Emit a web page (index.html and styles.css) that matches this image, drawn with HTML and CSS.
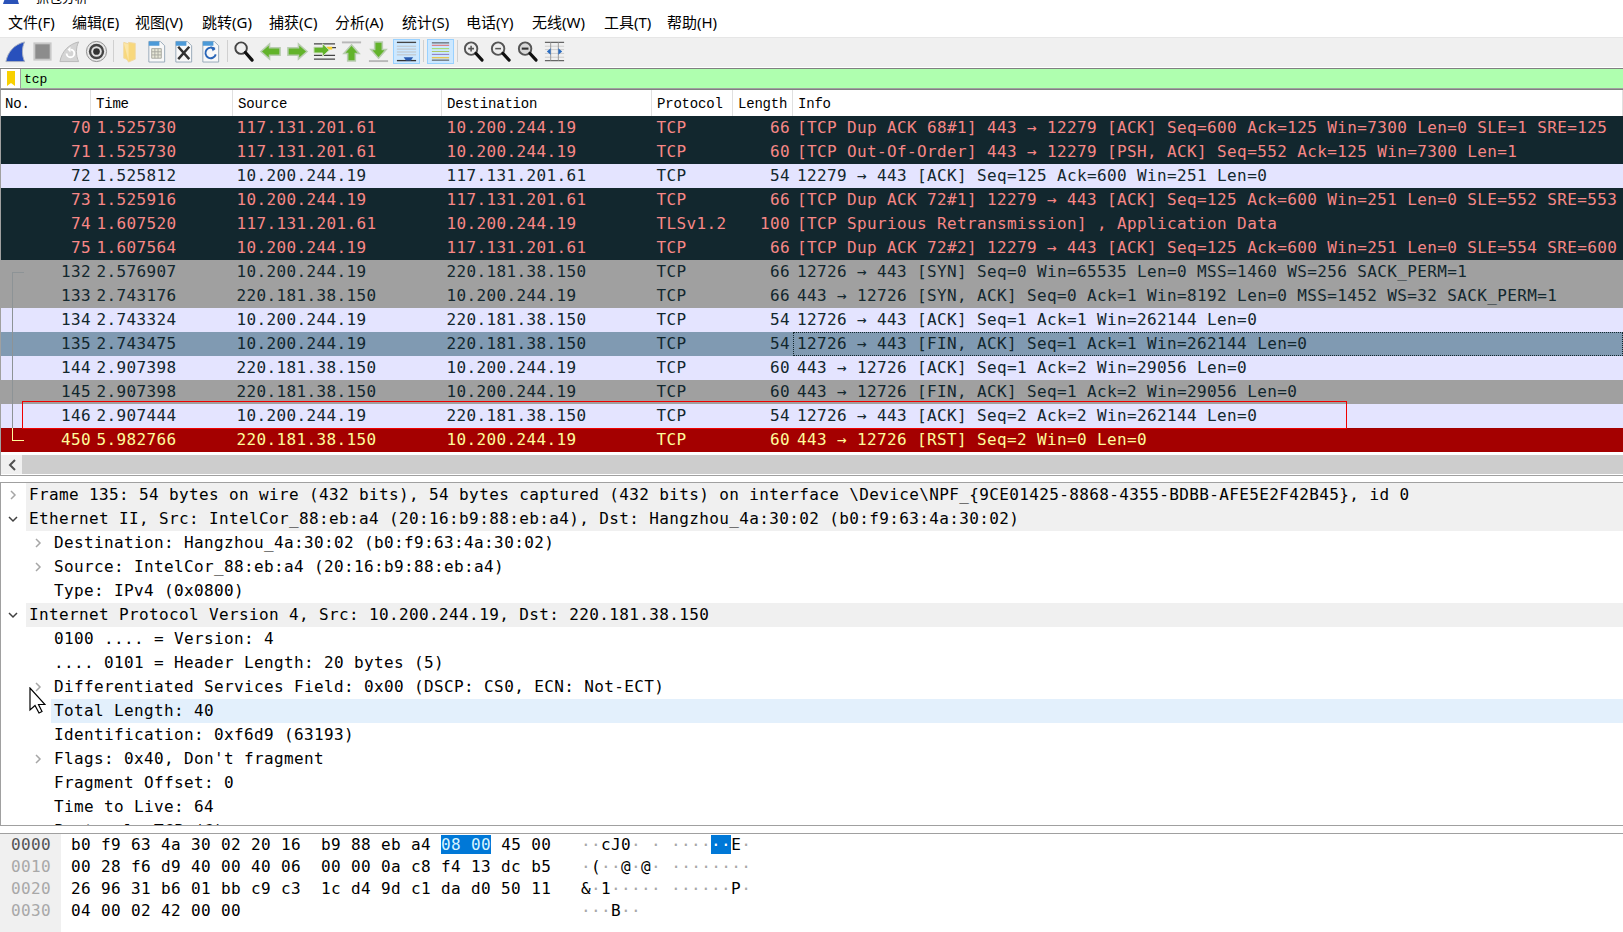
FILE: index.html
```html
<!DOCTYPE html>
<html lang="zh">
<head>
<meta charset="utf-8">
<title>Wireshark</title>
<link rel="stylesheet" href="styles.css">
</head>
<body>
<div class="app">
  <div class="titlebar">
    <svg class="title-icon" width="18" height="18" viewBox="0 0 18 18"><path d="M1 17C3 9 9 3 17 1C15 7 15 12 17 17Z" fill="#2a52b8"/></svg>
    <span class="title-text">抓包分析</span>
  </div>
  <nav class="menubar">
    <span class="m1">文件(F)</span><span class="m2">编辑(E)</span><span class="m3">视图(V)</span><span class="m4">跳转(G)</span><span class="m5">捕获(C)</span><span class="m6">分析(A)</span><span class="m7">统计(S)</span><span class="m8">电话(Y)</span><span class="m9">无线(W)</span><span class="m10">工具(T)</span><span class="m11">帮助(H)</span>
  </nav>
  <div class="toolbar">
    <span class="tb"><svg viewBox="0 0 24 24"><path d="M2 22.5C4 12 11 4.5 21.500 2C18.500 8 18.500 16 21.500 22.500Z" fill="#2850bc" stroke="#a8b0c0"/></svg></span>
    <span class="tb"><svg viewBox="0 0 24 24"><rect x="3.500" y="3.500" width="17" height="17" fill="#8c8c8c" stroke="#c8c8c8" stroke-width="2"/></svg></span>
    <span class="tb"><svg viewBox="0 0 24 24"><path d="M2 22.500C4 12 11 4.500 21.500 2C18.500 8 18.500 16 21.500 22.500Z" fill="#d4d4d4" stroke="#b8b8b8"/><path d="M9 14a4 4 0 1 0 4-4" fill="none" stroke="#fff" stroke-width="2"/><path d="M13 7v6l-3-3Z" fill="#fff"/></svg></span>
    <span class="tb"><svg viewBox="0 0 24 24"><circle cx="12" cy="12" r="10.500" fill="#e8e8e8" stroke="#8c8c8c"/><circle cx="12" cy="12" r="8" fill="#444"/><circle cx="12" cy="12" r="5.500" fill="#e0e0e0"/><circle cx="12" cy="12" r="3.500" fill="#333"/></svg></span>
    <span class="sep"></span>
    <span class="tb"><svg viewBox="0 0 24 24"><path d="M6 2.500L11 4V2.500L18 3.500V20L11 23C10 20 7 19 6 19Z" fill="#f8d87c" stroke="#f0d8a0"/><path d="M6 3L11 4.500V22" fill="#fbe6a8"/></svg></span>
    <span class="tb"><svg viewBox="0 0 24 24"><path d="M4 1.500H16L20.500 6V23H4Z" fill="#f8f8f8" stroke="#98a8b8"/><path d="M4 1.500H15V6H4Z" fill="#4c9ad8"/><path d="M7 9h10v10H7Z M7 12.300h10 M7 15.600h10 M10.300 9v10 M13.600 9v10" fill="#e8e8d8" stroke="#a8a8a0"/></svg></span>
    <span class="tb"><svg viewBox="0 0 24 24"><path d="M4 1.500H16L20.500 6V23H4Z" fill="#f8f8f8" stroke="#98a8b8"/><path d="M4 1.500H15V6H4Z" fill="#4c9ad8"/><path d="M6.500 7L18 20M18 7L6.500 20" stroke="#333" stroke-width="2.600"/></svg></span>
    <span class="tb"><svg viewBox="0 0 24 24"><path d="M4 1.500H16L20.500 6V23H4Z" fill="#f8f8f8" stroke="#98a8b8"/><path d="M4 1.500H15V6H4Z" fill="#4c9ad8"/><path d="M16.500 10A5.500 5.500 0 1 0 17.500 15" fill="none" stroke="#2a66b8" stroke-width="2"/><path d="M12 6.500l5 1.500-2.500 4Z" fill="#2a66b8"/></svg></span>
    <span class="sep"></span>
    <span class="tb"><svg viewBox="0 0 24 24"><circle cx="9.500" cy="8.500" r="6" fill="#f0f0f0" stroke="#444" stroke-width="2"/><path d="M14 13L21 21" stroke="#111" stroke-width="3.400" stroke-linecap="round"/></svg></span>
    <span class="tb"><svg viewBox="0 0 24 24"><path d="M2 12L11 4V8H22V16H11V20Z" fill="#62b32a" stroke="#b8ccb0" stroke-width="1.600"/></svg></span>
    <span class="tb"><svg viewBox="0 0 24 24"><path d="M22 12L13 4V8H2V16H13V20Z" fill="#62b32a" stroke="#b8ccb0" stroke-width="1.600"/></svg></span>
    <span class="tb"><svg viewBox="0 0 24 24"><path d="M1 4H23M1 8h23M1 16H23M1 20H23" stroke="#444" stroke-width="1.400"/><path d="M14 7h6v3h-6z" fill="#f4d030"/><path d="M17 10.500L10 4V7.500H1V13.500H10V17Z" fill="#62b32a" stroke="#d0e0c0"/></svg></span>
    <span class="tb"><svg viewBox="0 0 24 24"><path d="M2 2.500H22" stroke="#b8b8b8" stroke-width="2"/><path d="M12 5L20 14H16V22H8V14H4Z" fill="#62b32a" stroke="#b8ccb0" stroke-width="1.600"/></svg></span>
    <span class="tb"><svg viewBox="0 0 24 24"><path d="M2 22H22" stroke="#b8b8b8" stroke-width="2"/><path d="M12 19L20 10H16V2H8V10H4Z" fill="#62b32a" stroke="#b8ccb0" stroke-width="1.600"/></svg></span>
    <span class="tb on"><svg viewBox="0 0 24 24"><path d="M2 2.500H22" stroke="#444" stroke-width="1.400"/><path d="M2 6.500H22M2 9.500H22M2 12.500H22M2 15.500H22" stroke="#c0c0c0"/><path d="M2 21.500H22" stroke="#333" stroke-width="1.400"/><path d="M9 18H19L16.500 21.500H11.500Z" fill="#2a5cb0"/></svg></span>
    <span class="sep"></span>
    <span class="tb on"><svg viewBox="0 0 24 24"><path d="M3 3H21" stroke="#444"/><path d="M3 5.500H21" stroke="#e06060"/><path d="M3 9H21" stroke="#a0d860"/><path d="M3 12H21" stroke="#a8c860"/><path d="M3 15H21" stroke="#8870c0"/><path d="M3 18.500H21" stroke="#e8c040" stroke-width="1.300"/><path d="M3 21H21" stroke="#444"/></svg></span>
    <span class="sep"></span>
    <span class="tb"><svg viewBox="0 0 24 24"><circle cx="9.500" cy="9" r="6.500" fill="#eee" stroke="#555" stroke-width="2"/><path d="M6.500 9h6M9.500 6v6" stroke="#555" stroke-width="1.600"/><path d="M14.500 14L21 21" stroke="#111" stroke-width="3.200" stroke-linecap="round"/></svg></span>
    <span class="tb"><svg viewBox="0 0 24 24"><circle cx="9.500" cy="9" r="6.500" fill="#eee" stroke="#555" stroke-width="2"/><path d="M6.500 9h6" stroke="#555" stroke-width="1.600"/><path d="M14.500 14L21 21" stroke="#111" stroke-width="3.200" stroke-linecap="round"/></svg></span>
    <span class="tb"><svg viewBox="0 0 24 24"><circle cx="9.500" cy="9" r="6.500" fill="#d8d8d8" stroke="#555" stroke-width="2"/><path d="M6 9h7" stroke="#333" stroke-width="2.200"/><path d="M14.500 14L21 21" stroke="#111" stroke-width="3.200" stroke-linecap="round"/></svg></span>
    <span class="tb"><svg viewBox="0 0 24 24"><path d="M2 2.500H22M2 21.500H22" stroke="#666" stroke-width="1.300"/><path d="M2 6.500H22M2 10H22M2 14H22M2 18H22" stroke="#ccc"/><path d="M8 2.500V21.500M16 2.500V21.500" stroke="#999"/><path d="M4 12L8 8.500V15.500ZM20 12L16 8.500V15.500Z" fill="#2a6cc0"/></svg></span>
  </div>
  <div class="filter">
    <span class="filter-mark"><svg width="10" height="16" viewBox="0 0 10 16"><path d="M1 0H9V15L5 12L1 15Z" fill="#f8d000"/></svg></span>
    <span class="filter-text">tcp</span>
  </div>
  <section class="plist">
    <div class="phead">
      <span class="h1">No.</span><span class="h2">Time</span><span class="h3">Source</span><span class="h4">Destination</span><span class="h5">Protocol</span><span class="h6">Length</span><span class="h7">Info</span>
    </div>
    <div class="prows">
      <div class="row dark"><span class="no">70</span><span>1.525730</span><span>117.131.201.61</span><span>10.200.244.19</span><span>TCP</span><span class="len">66</span><span class="info">[TCP Dup ACK 68#1] 443 → 12279 [ACK] Seq=600 Ack=125 Win=7300 Len=0 SLE=1 SRE=125</span></div>
      <div class="row dark"><span class="no">71</span><span>1.525730</span><span>117.131.201.61</span><span>10.200.244.19</span><span>TCP</span><span class="len">60</span><span class="info">[TCP Out-Of-Order] 443 → 12279 [PSH, ACK] Seq=552 Ack=125 Win=7300 Len=1</span></div>
      <div class="row light"><span class="no">72</span><span>1.525812</span><span>10.200.244.19</span><span>117.131.201.61</span><span>TCP</span><span class="len">54</span><span class="info">12279 → 443 [ACK] Seq=125 Ack=600 Win=251 Len=0</span></div>
      <div class="row dark"><span class="no">73</span><span>1.525916</span><span>10.200.244.19</span><span>117.131.201.61</span><span>TCP</span><span class="len">66</span><span class="info">[TCP Dup ACK 72#1] 12279 → 443 [ACK] Seq=125 Ack=600 Win=251 Len=0 SLE=552 SRE=553</span></div>
      <div class="row dark"><span class="no">74</span><span>1.607520</span><span>117.131.201.61</span><span>10.200.244.19</span><span>TLSv1.2</span><span class="len">100</span><span class="info">[TCP Spurious Retransmission] , Application Data</span></div>
      <div class="row dark"><span class="no">75</span><span>1.607564</span><span>10.200.244.19</span><span>117.131.201.61</span><span>TCP</span><span class="len">66</span><span class="info">[TCP Dup ACK 72#2] 12279 → 443 [ACK] Seq=125 Ack=600 Win=251 Len=0 SLE=554 SRE=600</span></div>
      <div class="row gray"><span class="no">132</span><span>2.576907</span><span>10.200.244.19</span><span>220.181.38.150</span><span>TCP</span><span class="len">66</span><span class="info">12726 → 443 [SYN] Seq=0 Win=65535 Len=0 MSS=1460 WS=256 SACK_PERM=1</span></div>
      <div class="row gray"><span class="no">133</span><span>2.743176</span><span>220.181.38.150</span><span>10.200.244.19</span><span>TCP</span><span class="len">66</span><span class="info">443 → 12726 [SYN, ACK] Seq=0 Ack=1 Win=8192 Len=0 MSS=1452 WS=32 SACK_PERM=1</span></div>
      <div class="row light"><span class="no">134</span><span>2.743324</span><span>10.200.244.19</span><span>220.181.38.150</span><span>TCP</span><span class="len">54</span><span class="info">12726 → 443 [ACK] Seq=1 Ack=1 Win=262144 Len=0</span></div>
      <div class="row sel"><span class="no">135</span><span>2.743475</span><span>10.200.244.19</span><span>220.181.38.150</span><span>TCP</span><span class="len">54</span><span class="info">12726 → 443 [FIN, ACK] Seq=1 Ack=1 Win=262144 Len=0</span></div>
      <div class="row light"><span class="no">144</span><span>2.907398</span><span>220.181.38.150</span><span>10.200.244.19</span><span>TCP</span><span class="len">60</span><span class="info">443 → 12726 [ACK] Seq=1 Ack=2 Win=29056 Len=0</span></div>
      <div class="row gray"><span class="no">145</span><span>2.907398</span><span>220.181.38.150</span><span>10.200.244.19</span><span>TCP</span><span class="len">60</span><span class="info">443 → 12726 [FIN, ACK] Seq=1 Ack=2 Win=29056 Len=0</span></div>
      <div class="row light"><span class="no">146</span><span>2.907444</span><span>10.200.244.19</span><span>220.181.38.150</span><span>TCP</span><span class="len">54</span><span class="info">12726 → 443 [ACK] Seq=2 Ack=2 Win=262144 Len=0</span></div>
      <div class="row rst"><span class="no">450</span><span>5.982766</span><span>220.181.38.150</span><span>10.200.244.19</span><span>TCP</span><span class="len">60</span><span class="info">443 → 12726 [RST] Seq=2 Win=0 Len=0</span></div>
      <div class="conv"></div>
      <div class="conv-end"></div>
      <div class="redbox"></div>
    </div>
    <div class="hscroll">
      <span class="hs-btn"><svg width="10" height="12" viewBox="0 0 10 12"><path d="M8 1L3 6L8 11" fill="none" stroke="#505050" stroke-width="2"/></svg></span>
      <span class="hs-track"></span>
    </div>
  </section>
  <section class="details">
    <div class="d l0"><svg class="chev" viewBox="0 0 12 12"><path d="M4 2L8 6L4 10" fill="none" stroke="#a6a6a6" stroke-width="1.500"/></svg><span class="txt grayb">Frame 135: 54 bytes on wire (432 bits), 54 bytes captured (432 bits) on interface \Device\NPF_{9CE01425-8868-4355-BDBB-AFE5E2F42B45}, id 0</span></div>
    <div class="d l0"><svg class="chev" viewBox="0 0 12 12"><path d="M2 4L6 8L10 4" fill="none" stroke="#404040" stroke-width="1.500"/></svg><span class="txt grayb">Ethernet II, Src: IntelCor_88:eb:a4 (20:16:b9:88:eb:a4), Dst: Hangzhou_4a:30:02 (b0:f9:63:4a:30:02)</span></div>
    <div class="d l1"><svg class="chev" viewBox="0 0 12 12"><path d="M4 2L8 6L4 10" fill="none" stroke="#a6a6a6" stroke-width="1.500"/></svg><span class="txt">Destination: Hangzhou_4a:30:02 (b0:f9:63:4a:30:02)</span></div>
    <div class="d l1"><svg class="chev" viewBox="0 0 12 12"><path d="M4 2L8 6L4 10" fill="none" stroke="#a6a6a6" stroke-width="1.500"/></svg><span class="txt">Source: IntelCor_88:eb:a4 (20:16:b9:88:eb:a4)</span></div>
    <div class="d l1"><span class="nochev"></span><span class="txt">Type: IPv4 (0x0800)</span></div>
    <div class="d l0"><svg class="chev" viewBox="0 0 12 12"><path d="M2 4L6 8L10 4" fill="none" stroke="#404040" stroke-width="1.500"/></svg><span class="txt grayb">Internet Protocol Version 4, Src: 10.200.244.19, Dst: 220.181.38.150</span></div>
    <div class="d l1"><span class="nochev"></span><span class="txt">0100 .... = Version: 4</span></div>
    <div class="d l1"><span class="nochev"></span><span class="txt">.... 0101 = Header Length: 20 bytes (5)</span></div>
    <div class="d l1"><svg class="chev" viewBox="0 0 12 12"><path d="M4 2L8 6L4 10" fill="none" stroke="#a6a6a6" stroke-width="1.500"/></svg><span class="txt">Differentiated Services Field: 0x00 (DSCP: CS0, ECN: Not-ECT)</span></div>
    <div class="d l1"><span class="nochev"></span><span class="txt hover">Total Length: 40</span></div>
    <div class="d l1"><span class="nochev"></span><span class="txt">Identification: 0xf6d9 (63193)</span></div>
    <div class="d l1"><svg class="chev" viewBox="0 0 12 12"><path d="M4 2L8 6L4 10" fill="none" stroke="#a6a6a6" stroke-width="1.500"/></svg><span class="txt">Flags: 0x40, Don't fragment</span></div>
    <div class="d l1"><span class="nochev"></span><span class="txt">Fragment Offset: 0</span></div>
    <div class="d l1"><span class="nochev"></span><span class="txt">Time to Live: 64</span></div>
    <div class="d l1"><span class="nochev"></span><span class="txt">Protocol: TCP (6)</span></div>
    <svg class="cursor" width="17" height="27" viewBox="0 0 17 27"><path d="M1 1V23L6 18.500L10 26L13 24.500L9.500 17.500H16Z" fill="#fff" stroke="#000" stroke-width="1.200"/></svg>
  </section>
  <section class="hex">
    <div class="offsets">
      <div class="hot">0000</div><div>0010</div><div>0020</div><div>0030</div>
    </div>
    <div class="bytes">
      <div>b0 f9 63 4a 30 02 20 16  b9 88 eb a4 <b>08 00</b> 45 00</div>
      <div>00 28 f6 d9 40 00 40 06  00 00 0a c8 f4 13 dc b5</div>
      <div>26 96 31 b6 01 bb c9 c3  1c d4 9d c1 da d0 50 11</div>
      <div>04 00 02 42 00 00</div>
    </div>
    <div class="ascii">
      <div><i>··</i>cJ0<i>·</i> <i>·</i> <i>····</i><b>··</b>E<i>·</i></div>
      <div><i>·</i>(<i>··</i>@<i>·</i>@<i>·</i> <i>········</i></div>
      <div>&amp;<i>·</i>1<i>·····</i> <i>······</i>P<i>·</i></div>
      <div><i>···</i>B<i>··</i></div>
    </div>
  </section>
</div>
</body>
</html>
```
FILE: styles.css
```css
* { box-sizing: border-box; }
html, body { margin: 0; padding: 0; background: #fff; }
.app {
  width: 1623px;
  height: 932px;
  overflow: hidden;
  display: flex;
  flex-direction: column;
  position: relative;
  color: #000;
}

.titlebar {
  height: 5px;
  overflow: hidden;
  display: flex;
  align-items: flex-end;
  padding-left: 2px;
  gap: 16px;
  flex: none;
}
.title-icon { flex: none; }
.title-text {
  font: 13px/16px "Noto Sans CJK SC", sans-serif;
  flex: none;
}

.menubar {
  height: 32px;
  flex: none;
  display: flex;
  align-items: center;
  padding: 3px 0 0 8px;
  font: 15px/29px "Noto Sans", "Noto Sans CJK SC", sans-serif;
  white-space: nowrap;
}
.menubar span { flex: none; }
.m1 { width: 64px; } .m2 { width: 63px; } .m3 { width: 67px; } .m4 { width: 67px; }
.m5 { width: 66px; } .m6 { width: 67px; } .m7 { width: 64px; } .m8 { width: 66px; }
.m9 { width: 72px; } .m10 { width: 63px; }

.toolbar {
  height: 30px;
  flex: none;
  background: #f0f0f0;
  border-top: 1px solid #e6e6e6;
  display: flex;
  align-items: center;
  padding: 0 0 3px 2px;
}
.tb {
  width: 27px;
  height: 25px;
  flex: none;
  display: flex;
  align-items: center;
  justify-content: center;
}
.tb svg { width: 23px; height: 23px; display: block; }
.tb.on {
  background: #cce8ff;
  border: 1px solid #99d1ff;
  margin: 0 0.5px;
}
.sep {
  width: 1px;
  height: 22px;
  background: #d0d0d0;
  margin: 0 2.5px;
  flex: none;
}

.filter {
  margin-top: 1px;
  height: 21px;
  flex: none;
  display: flex;
  align-items: stretch;
  background: #afffaf;
  border-top: 1px solid #808080;
  border-bottom: 1px solid #a0a0a0;
}
.filter-mark {
  width: 21px;
  flex: none;
  background: #fff;
  border-left: 1px solid #a0a0a0;
  border-right: 1px solid #a0a0a0;
  display: flex;
  align-items: center;
  justify-content: center;
}
.filter-text {
  font: 13px/21px "Liberation Mono", monospace;
  padding-left: 3px;
}

.plist {
  height: 387px;
  flex: none;
  border-top: 1px solid #808080;
  border-left: 1px solid #a0a0a0;
  border-bottom: 1px solid #a0a0a0;
  display: flex;
  flex-direction: column;
  overflow: hidden;
}
.phead {
  height: 26px;
  flex: none;
  display: grid;
  grid-template-columns: 90px 142px 209px 210px 81px 60px 1fr;
  font: 14px/28px "Liberation Mono", monospace;
  letter-spacing: -0.2px;
  background: #fff;
}
.phead span { border-right: 1px solid #e0e0e0; padding-left: 4px; }
.h2, .h3, .h4, .h5, .h6, .h7 { text-indent: 1px; }
.h7 { border-right: 0; }

.prows { position: relative; flex: none; height: 336px; }
.row {
  height: 24px;
  display: grid;
  grid-template-columns: 90px 140px 210px 210px 82px 60px 1fr;
  font: 16px/24px "DejaVu Sans Mono", monospace;
  letter-spacing: 0.37px;
  white-space: pre;
  overflow: hidden;
}
.row span { padding-left: 5.5px; overflow: hidden; }
.row .no { padding-left: 0; text-align: right; }
.row .len { padding-left: 0; padding-right: 3px; text-align: right; }
.row .info { padding-left: 4px; }
.dark { background: #12272e; color: #f78787; }
.light { background: #e4e4ff; color: #12272e; }
.gray { background: #a0a0a0; color: #12272e; }
.sel { background: #809ab2; color: #12272e; }
.sel .info { border: 1px dotted #12272e; line-height: 22px; padding-left: 3px; }
.rst { background: #a40000; color: #fffc9c; }

.conv {
  position: absolute;
  left: 11px;
  top: 156px;
  width: 12px;
  height: 156px;
  border-left: 1px solid #8d9396;
  border-top: 1px solid #8d9396;
}
.conv-end {
  position: absolute;
  left: 11px;
  top: 312px;
  width: 12px;
  height: 13px;
  border-left: 1px solid #fffc9c;
  border-bottom: 1px solid #fffc9c;
}
.redbox {
  position: absolute;
  left: 21px;
  top: 285px;
  width: 1325px;
  height: 28px;
  border: 1px solid #f00000;
}

.hscroll {
  margin-top: 3px;
  height: 19px;
  flex: none;
  display: flex;
}
.hs-btn {
  width: 21px;
  flex: none;
  display: flex;
  align-items: center;
  justify-content: center;
  background: #f0f0f0;
}
.hs-track { flex: 1; background: #cdcdcd; }

.details {
  margin-top: 6px;
  height: 344px;
  flex: none;
  border-top: 1px solid #a0a0a0;
  border-bottom: 1px solid #a0a0a0;
  border-left: 1px solid #a0a0a0;
  overflow: hidden;
  position: relative;
  font: 16px/24px "DejaVu Sans Mono", monospace;
  letter-spacing: 0.37px;
}
.d { height: 24px; display: flex; align-items: center; }
.l0 { padding-left: 6px; }
.l1 { padding-left: 31px; }
.chev { width: 12px; height: 12px; flex: none; margin-right: 7px; }
.nochev { width: 19px; flex: none; }
.txt { flex: 1; padding-left: 3px; white-space: pre; }
.grayb { background: #f0f0f0; }
.hover { background: #e3f0fc; }
.cursor { position: absolute; left: 28px; top: 204px; }

.hex {
  margin-top: 7px;
  flex: 1;
  border-top: 1px solid #a0a0a0;
  display: flex;
  font: 16px/22px "DejaVu Sans Mono", monospace;
  letter-spacing: 0.37px;
}
.hex > div > div { white-space: pre; height: 22px; }
.offsets {
  width: 61px;
  flex: none;
  background: #f0f0f0;
  padding-left: 11px;
  color: #a8a8a8;
}
.offsets .hot { color: #555; }
.bytes { width: 520px; flex: none; padding-left: 10px; }
.bytes b, .ascii b { font-weight: normal; background: #0078d7; color: #d8f4ff; }
.ascii i { font-style: normal; color: #a8a8a8; }
.ascii b { color: #fff; }
```
